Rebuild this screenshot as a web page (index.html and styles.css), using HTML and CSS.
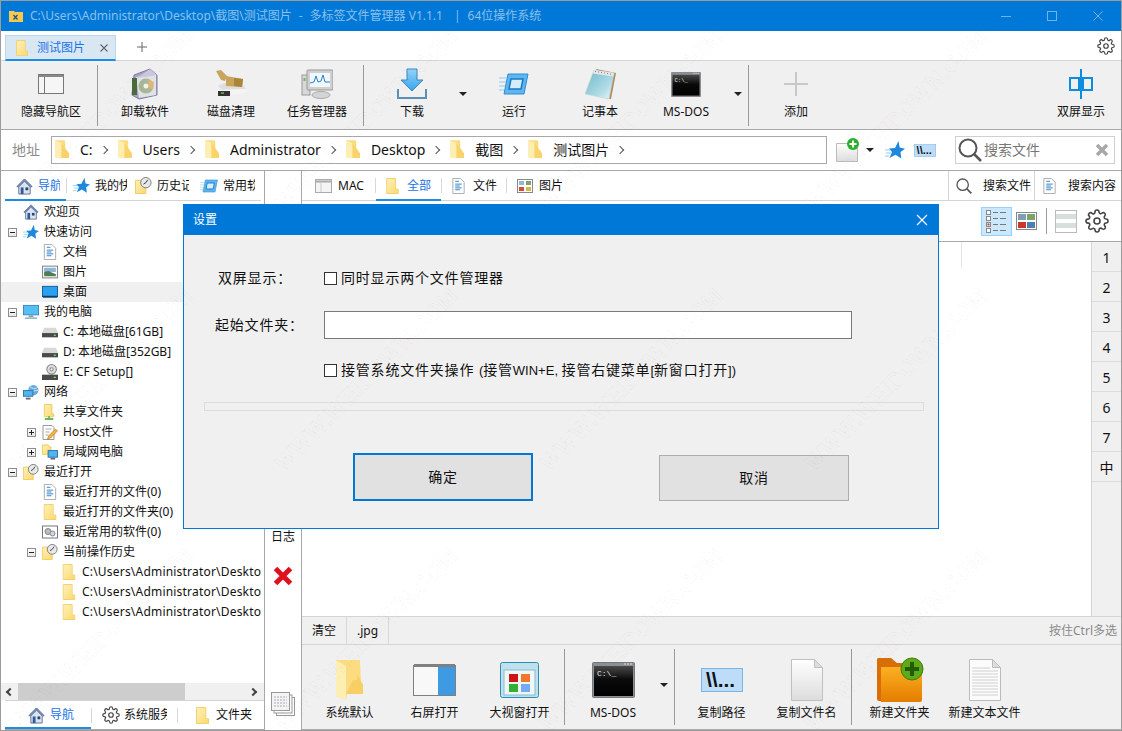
FILE: index.html
```html
<!DOCTYPE html>
<html lang="zh-CN">
<head>
<meta charset="utf-8">
<title>多标签文件管理器</title>
<link rel="stylesheet" href="styles.css">
</head>
<body>
<svg class="defs" width="0" height="0" aria-hidden="true">
<defs>
<linearGradient id="gy" x1="0" y1="0" x2="1" y2="1"><stop offset="0" stop-color="#fff0b8"/><stop offset="1" stop-color="#fbd970"/></linearGradient>
<linearGradient id="gb" x1="0" y1="0" x2="0" y2="1"><stop offset="0" stop-color="#8fd3fa"/><stop offset="1" stop-color="#3aa5ee"/></linearGradient>
<linearGradient id="gg" x1="0" y1="0" x2="0" y2="1"><stop offset="0" stop-color="#ffffff"/><stop offset="1" stop-color="#dcdcdc"/></linearGradient>
<linearGradient id="go" x1="0" y1="0" x2="0" y2="1"><stop offset="0" stop-color="#fdb022"/><stop offset="1" stop-color="#e37d00"/></linearGradient>
<linearGradient id="gk" x1="0" y1="0" x2="0" y2="1"><stop offset="0" stop-color="#4a4a4a"/><stop offset=".45" stop-color="#0a0a0a"/><stop offset="1" stop-color="#000"/></linearGradient>
<linearGradient id="gn" x1="0" y1="0" x2="1" y2="1"><stop offset="0" stop-color="#6fb7c9"/><stop offset=".65" stop-color="#aedbe6"/><stop offset="1" stop-color="#f2f6f6"/></linearGradient>
<symbol id="folder" viewBox="0 0 14 18"><path d="M.5.5h10v12h3v5H.5z" fill="#fde8a0" stroke="#eecb5c"/><path d="M1 1h9v12l3 .1V17H1z" fill="url(#gy)"/></symbol>
<symbol id="addr" viewBox="0 0 15 21"><path d="M0 0h10l1 1v12l3 1 1 5-12 0-3-1z" fill="#fbdc80"/><path d="M0 0l7 3v17l-4-1-3-1z" fill="#fdeeb4"/><path d="M7 3l8 11v5H7z" fill="#fad36a"/></symbol>
<symbol id="clockf" viewBox="0 0 18 18"><path d="M.5 3.500h11v14H.5z" fill="url(#gy)" stroke="#eecb5c"/><circle cx="11.500" cy="6" r="5.500" fill="#e8e8e8" stroke="#777"/><path d="M11.500 6l-2.500 1.500M11.500 6l2-3" stroke="#333" fill="none"/></symbol>
<symbol id="home" viewBox="0 0 18 18"><path d="M9 1L1 9l2 1v7h12v-7l2-1z" fill="#dfe4ee" stroke="#5f6f90"/><path d="M9 1L1 9l2 1 6-6 6 6 2-1z" fill="#6d84b4"/><path d="M5 10h3v7H5z" fill="#2a5d9e"/><path d="M10 10h3v3h-3z" fill="#25486f"/></symbol>
<symbol id="star" viewBox="0 0 20 20"><path d="M13.500 1l1.200 6.500 5.300 1.200-4.500 3.300.8 6.500-5.800-3.700L4.500 18l2.500-6-3-3.500 6 -.5z" fill="#1e88dc"/><path d="M0 10h5M1 13h5M0 16h4" stroke="#8ccbf2"/></symbol>
<symbol id="run" viewBox="0 0 30 22"><path d="M9 1h20l-4 20H5z" fill="#61b5ec" stroke="#2b8fd8"/><path d="M12 6h12l-2 10H10z" fill="#d4ecfb" stroke="#1679c8" stroke-width="1.500"/><path d="M0 5h8M0 9h7M0 13h6M0 17h5" stroke="#8ccbf2"/></symbol>
<symbol id="doc" viewBox="0 0 13 17"><path d="M.5.5h8l4 4v12H.5z" fill="#fff" stroke="#aaa"/><path d="M7 3.500H3M10 6.500H3M8 8.500H3M10 10.500H3M8 12.500H3" stroke="#2c7fc4"/></symbol>
<symbol id="pic" viewBox="0 0 15 12"><rect x=".5" y=".5" width="14" height="11" fill="#fff" stroke="#888"/><rect x="2" y="2" width="11" height="4" fill="#8fb7d6"/><path d="M2 6l4-1 7 3v2H2z" fill="#4f7c5a"/></symbol>
<symbol id="desk" viewBox="0 0 17 13"><rect x=".5" y=".5" width="16" height="11" fill="#2aa0ee" stroke="#0e5c9c"/><path d="M1 11.500h15" stroke="#0a3f72" stroke-width="2"/></symbol>
<symbol id="mon" viewBox="0 0 17 15"><rect x=".5" y=".5" width="16" height="10" fill="#55bff5" stroke="#3b87bb"/><path d="M6 12h5" stroke="#7aa" stroke-width="2"/><path d="M2 14h13" stroke="#8fa8b8" stroke-width="1.500"/></symbol>
<symbol id="hdd" viewBox="0 0 15 10"><path d="M2 1h11l2 5v3H0V6z" fill="#d8d8d8"/><path d="M0 6h15v4H0z" fill="#4a4a4a"/><path d="M11 8h2" stroke="#7f6"/></symbol>
<symbol id="cd" viewBox="0 0 15 15"><circle cx="9" cy="5" r="4.500" fill="#ddd" stroke="#888"/><circle cx="9" cy="5" r="1.500" fill="#fff" stroke="#888"/><path d="M0 10h15v5H0z" fill="#4a4a4a"/><path d="M11 12.500h2" stroke="#7f6"/></symbol>
<symbol id="net" viewBox="0 0 17 16"><circle cx="11" cy="6" r="5.500" fill="#68a8dc"/><path d="M7 2q4 4 9 1M6 6q5 2 10 0" stroke="#cfe6f6" fill="none"/><rect x=".5" y="6.500" width="10" height="6" fill="#4fb5ef" stroke="#2672aa"/><path d="M3 15h5" stroke="#667" stroke-width="2"/></symbol>
<symbol id="share" viewBox="0 0 13 17"><path d="M.5.5h8v10h2v3H.5z" fill="url(#gy)" stroke="#eecb5c"/><path d="M5.500 13v2M1 16h9" stroke="#36a336" stroke-width="1.500"/></symbol>
<symbol id="host" viewBox="0 0 15 16"><path d="M.5 1.500h9l2 2v12H.5z" fill="#fff" stroke="#999"/><path d="M3 5h6M3 8h4M3 11h3" stroke="#aaa"/><path d="M13 5l2 2-7 7-3 1 1-3z" fill="#f2b23a" stroke="#b27a14" stroke-width=".6"/></symbol>
<symbol id="lan" viewBox="0 0 17 16"><path d="M.5 .5h6l1 2h2v8H.5z" fill="url(#gy)" stroke="#eecb5c"/><rect x="6.500" y="6.500" width="10" height="7" fill="#4fb5ef" stroke="#2672aa"/><path d="M9 15h5" stroke="#667" stroke-width="2"/></symbol>
<symbol id="soft" viewBox="0 0 16 13"><rect x=".5" y=".5" width="15" height="12" fill="#fff" stroke="#777"/><circle cx="6" cy="6" r="3" fill="#bbb" stroke="#888"/><circle cx="10.500" cy="8" r="2.500" fill="#c9d6e6" stroke="#889"/></symbol>
<symbol id="gear" viewBox="0 0 24 24"><g fill="none" stroke="#444" stroke-width="1.600" stroke-linejoin="round"><circle cx="12" cy="12" r="3"/><path d="M19.400 15a1.650 1.650 0 0 0 .33 1.820l.06.06a2 2 0 1 1-2.830 2.830l-.06-.06a1.650 1.650 0 0 0-1.820-.33 1.650 1.650 0 0 0-1 1.510V21a2 2 0 1 1-4 0v-.09A1.650 1.650 0 0 0 9 19.400a1.650 1.650 0 0 0-1.820.33l-.06.06a2 2 0 1 1-2.830-2.830l.06-.06a1.650 1.650 0 0 0 .33-1.820 1.650 1.650 0 0 0-1.510-1H3a2 2 0 1 1 0-4h.09A1.650 1.650 0 0 0 4.600 9a1.650 1.650 0 0 0-.33-1.820l-.06-.06a2 2 0 1 1 2.830-2.830l.06.06a1.650 1.650 0 0 0 1.820.33H9a1.650 1.650 0 0 0 1-1.510V3a2 2 0 1 1 4 0v.09a1.650 1.650 0 0 0 1 1.510 1.650 1.650 0 0 0 1.820-.33l.06-.06a2 2 0 1 1 2.830 2.830l-.06.06a1.650 1.650 0 0 0-.33 1.820V9a1.650 1.650 0 0 0 1.510 1H21a2 2 0 1 1 0 4h-.09a1.650 1.650 0 0 0-1.510 1z"/></g></symbol>
<symbol id="mag" viewBox="0 0 24 24"><circle cx="10" cy="10" r="8.500" fill="none" stroke="#555" stroke-width="2"/><path d="M16 16l7 7" stroke="#555" stroke-width="2.500"/></symbol>
<symbol id="dos" viewBox="0 0 43 36"><rect x=".5" y=".5" width="42" height="35" rx="1" fill="#8b9096" stroke="#777"/><rect x="2" y="4" width="39" height="30" fill="url(#gk)"/><path d="M32 2h2M35 2h2M38 2h2" stroke="#ddd"/><text x="5" y="14" class="dost">C:\_</text></symbol>
<symbol id="copy" viewBox="0 0 42 24"><rect x=".5" y=".5" width="41" height="23" fill="#bcdcf8" stroke="#7cb4e4"/><text x="5" y="19" class="copyt">\\...</text></symbol>
<symbol id="page" viewBox="0 0 32 42"><path d="M.5.500h23l8 8v33H.5z" fill="url(#gg)" stroke="#c0c0c0"/><path d="M23.500.500v8h8z" fill="#ddd" stroke="#c0c0c0"/></symbol>
</defs>
</svg>

<div class="app">
  <header class="titlebar">
    <svg class="tfolder" viewBox="0 0 14 12"><path d="M0 1h5l1 1h8v10H0z" fill="#f4c94e"/><path d="M4.500 5l4 4.500M8.500 5l-4 4.500" stroke="#16528a" stroke-width="1.200"/></svg>
    <span class="ttext">C:\Users\Administrator\Desktop\截图\测试图片<span class="tdash">-</span>多标签文件管理器 V1.1.1<span class="tbar">|</span>64位操作系统</span>
    <span class="grow"></span>
    <svg class="wbtn" viewBox="0 0 12 12"><path d="M1 6.500h10" stroke="#6fb3e8"/></svg>
    <svg class="wbtn" viewBox="0 0 12 12"><rect x="1.500" y="1.500" width="9" height="9" fill="none" stroke="#6fb3e8"/></svg>
    <svg class="wbtn" viewBox="0 0 12 12"><path d="M1.500 1.500l9 9M10.500 1.500l-9 9" stroke="#6fb3e8"/></svg>
  </header>

  <div class="tabrow">
    <div class="doctab">
      <svg class="i-folder"><use href="#folder"/></svg>
      <span class="doclabel">测试图片</span>
      <svg class="docx" viewBox="0 0 10 10"><path d="M1.500 1.500l7 7M8.500 1.500l-7 7" stroke="#666" stroke-width="1.100"/></svg>
    </div>
    <svg class="docplus" viewBox="0 0 10 10"><path d="M5 0v10M0 5h10" stroke="#666"/></svg>
    <span class="grow"></span>
    <svg class="i-gear16"><use href="#gear"/></svg>
  </div>

  <div class="toolbar">
    <div class="tool first">
      <div class="ticon"><svg width="26" height="20" viewBox="0 0 26 20"><rect x=".5" y=".5" width="25" height="19" fill="#f6f6f6" stroke="#777"/><path d="M.5 2h25" stroke="#888" stroke-width="2"/><path d="M6.500 3v16" stroke="#777"/></svg></div>
      <span>隐藏导航区</span>
    </div>
    <i class="vsep s1"></i>
    <div class="tool">
      <div class="ticon"><svg width="28" height="32" viewBox="0 0 28 32"><path d="M3 7L19 1l7 6v20L8 31 1 27z" fill="#a9a4c8" stroke="#7f7ba2"/><path d="M5 9l20-3v21L8 30z" fill="#dfe3e4"/><path d="M19 1l7 6-20 3z" fill="#c9c6de"/><circle cx="15" cy="18" r="7.500" fill="#a8b79b"/><circle cx="15" cy="18" r="2.500" fill="#f6f2e2"/><path d="M17 12l6 2-1 8-4-3z" fill="#e2b678"/><path d="M1 10h5v17H1z" fill="#4d6a3c"/></svg></div>
      <span>卸载软件</span>
    </div>
    <div class="tool">
      <div class="ticon"><svg width="30" height="28" viewBox="0 0 30 28"><path d="M2 16l6-3 18 1 4 5-24 1z" fill="#dedede"/><path d="M2 20l28-1v4L6 26H2z" fill="#f4f4f4"/><path d="M2 21h12v5H2z" fill="#333"/><path d="M5 23h3" stroke="#8f6"/><path d="M10 6l17 3-1 8-16-1z" fill="#c8a558"/><path d="M18 8l9 1-1 8-8-1z" fill="#a9853e"/><path d="M0 1l5-1 6 6-2 5-4-1z" fill="#c9a660"/></svg></div>
      <span>磁盘清理</span>
    </div>
    <div class="tool">
      <div class="ticon"><svg width="32" height="30" viewBox="0 0 32 30"><rect x="1" y="6" width="8" height="20" fill="#d8d8d8" stroke="#999"/><rect x="2.500" y="9" width="2" height="3" fill="#6b6"/><rect x="6" y="1" width="26" height="20" rx="1" fill="#d0d0d0" stroke="#999"/><rect x="9" y="4" width="20" height="14" fill="#f0f8fd"/><path d="M9 14l4-1 2-6 2 6 3-1 2-6 2 7 5 0" fill="none" stroke="#2a7fc8"/><ellipse cx="20" cy="26" rx="9" ry="3.500" fill="#d4d4d4" stroke="#aaa"/></svg></div>
      <span>任务管理器</span>
    </div>
    <i class="vsep s2"></i>
    <div class="tool">
      <div class="ticon"><svg width="30" height="32" viewBox="0 0 30 32"><path d="M10 1h10v11h6L15 23 4 12h6z" fill="url(#gb)" stroke="#3c86bf"/><path d="M1 21v9h28v-9" fill="none" stroke="#5a8fb8" stroke-width="2"/></svg></div>
      <span>下载</span>
    </div>
    <div class="drop"><i class="caret"></i></div>
    <div class="tool">
      <div class="ticon"><svg class="i-runlg"><use href="#run"/></svg></div>
      <span>运行</span>
    </div>
    <div class="tool">
      <div class="ticon"><svg width="31" height="32" viewBox="0 0 31 32"><path d="M11 1l20 4-5 26h-4z" fill="#a98d5c"/><path d="M9 2l20 3-5 26L0 26z" fill="url(#gn)" stroke="#c4d4d8" stroke-width=".6"/><path d="M9 2l20 3-.7 3.500-20.500-3z" fill="#e6e6e6"/><path d="M10 3.500h1M13 4h1M16 4.500h1M19 5h1M22 5.500h1M25 6h1" stroke="#888"/></svg></div>
      <span>记事本</span>
    </div>
    <div class="tool">
      <div class="ticon"><svg width="30" height="25"><use href="#dos"/></svg></div>
      <span>MS-DOS</span>
    </div>
    <div class="drop narrow"><i class="caret"></i></div>
    <i class="vsep s3"></i>
    <div class="tool">
      <div class="ticon"><svg width="26" height="26" viewBox="0 0 26 26"><path d="M13 1v24M1 13h24" stroke="#c8c8c8" stroke-width="2"/></svg></div>
      <span>添加</span>
    </div>
    <span class="grow"></span>
    <div class="tool last">
      <div class="ticon"><svg width="26" height="30" viewBox="0 0 26 30"><rect x="2" y="9" width="9" height="12" fill="none" stroke="#0e8de0" stroke-width="2"/><rect x="15" y="9" width="9" height="12" fill="none" stroke="#0e8de0" stroke-width="2"/><path d="M13 0v30" stroke="#0e8de0" stroke-width="2"/></svg></div>
      <span>双屏显示</span>
    </div>
  </div>

  <div class="addrbar">
    <span class="addrlabel">地址</span>
    <div class="crumbs">
      <svg class="i-addr"><use href="#addr"/></svg><span class="c">C:</span><i class="chev"></i>
      <svg class="i-addr"><use href="#addr"/></svg><span class="c">Users</span><i class="chev"></i>
      <svg class="i-addr"><use href="#addr"/></svg><span class="c">Administrator</span><i class="chev"></i>
      <svg class="i-addr"><use href="#addr"/></svg><span class="c">Desktop</span><i class="chev"></i>
      <svg class="i-addr"><use href="#addr"/></svg><span class="c">截图</span><i class="chev"></i>
      <svg class="i-addr"><use href="#addr"/></svg><span class="c">测试图片</span><i class="chev"></i>
    </div>
    <svg class="newdoc" viewBox="0 0 24 24"><path d="M.5 5.500h15l6 5v13H.5z" fill="url(#gg)" stroke="#bbb"/><circle cx="17" cy="6" r="6" fill="#2cae2c"/><path d="M17 2.500v7M13.500 6h7" stroke="#fff" stroke-width="2"/></svg>
    <i class="caret addrcaret"></i>
    <svg class="i-star20"><use href="#star"/></svg>
    <svg class="i-copy22"><use href="#copy"/></svg>
    <div class="search">
      <svg class="i-mag25"><use href="#mag"/></svg>
      <span class="ph">搜索文件</span>
      <span class="grow"></span>
      <svg class="searchx" viewBox="0 0 14 14"><path d="M2 2l10 10M12 2L2 12" stroke="#a8a8a8" stroke-width="3.500"/></svg>
    </div>
  </div>

  <main class="main">
    <aside class="nav">
      <div class="ltabs">
        <div class="ltab on w60"><svg class="i16"><use href="#home"/></svg><span class="clip c21">导航</span></div>
        <i class="tick"></i>
        <div class="ltab w69"><svg class="i16"><use href="#star"/></svg><span class="clip c32">我的快捷</span></div>
        <div class="ltab w65"><svg class="i16"><use href="#clockf"/></svg><span class="clip c32">历史记录</span></div>
        <div class="ltab w62"><svg class="i-run18"><use href="#run"/></svg><span class="clip c32">常用软件</span></div>
      </div>
      <div class="tree">
        <div class="row l0"><i class="exp none"></i><svg class="ti"><use href="#home"/></svg><span>欢迎页</span></div>
        <div class="row l0"><i class="exp minus"></i><svg class="ti"><use href="#star"/></svg><span>快速访问</span></div>
        <div class="row l1"><i class="exp none"></i><svg class="ti"><use href="#doc"/></svg><span>文档</span></div>
        <div class="row l1"><i class="exp none"></i><svg class="ti"><use href="#pic"/></svg><span>图片</span></div>
        <div class="row l1 sel"><i class="exp none"></i><svg class="ti"><use href="#desk"/></svg><span>桌面</span></div>
        <div class="row l0"><i class="exp minus"></i><svg class="ti"><use href="#mon"/></svg><span>我的电脑</span></div>
        <div class="row l1"><i class="exp none"></i><svg class="ti"><use href="#hdd"/></svg><span>C: 本地磁盘[61GB]</span></div>
        <div class="row l1"><i class="exp none"></i><svg class="ti"><use href="#hdd"/></svg><span>D: 本地磁盘[352GB]</span></div>
        <div class="row l1"><i class="exp none"></i><svg class="ti"><use href="#cd"/></svg><span>E: CF Setup[]</span></div>
        <div class="row l0"><i class="exp minus"></i><svg class="ti"><use href="#net"/></svg><span>网络</span></div>
        <div class="row l1"><i class="exp none"></i><svg class="ti"><use href="#share"/></svg><span>共享文件夹</span></div>
        <div class="row l1"><i class="exp plus"></i><svg class="ti"><use href="#host"/></svg><span>Host文件</span></div>
        <div class="row l1"><i class="exp plus"></i><svg class="ti"><use href="#lan"/></svg><span>局域网电脑</span></div>
        <div class="row l0"><i class="exp minus"></i><svg class="ti"><use href="#clockf"/></svg><span>最近打开</span></div>
        <div class="row l1"><i class="exp none"></i><svg class="ti"><use href="#doc"/></svg><span>最近打开的文件(0)</span></div>
        <div class="row l1"><i class="exp none"></i><svg class="ti"><use href="#folder"/></svg><span>最近打开的文件夹(0)</span></div>
        <div class="row l1"><i class="exp none"></i><svg class="ti"><use href="#soft"/></svg><span>最近常用的软件(0)</span></div>
        <div class="row l1"><i class="exp minus"></i><svg class="ti"><use href="#clockf"/></svg><span>当前操作历史</span></div>
        <div class="row l2"><i class="exp none"></i><svg class="ti"><use href="#folder"/></svg><span>C:\Users\Administrator\Deskto</span></div>
        <div class="row l2"><i class="exp none"></i><svg class="ti"><use href="#folder"/></svg><span>C:\Users\Administrator\Deskto</span></div>
        <div class="row l2"><i class="exp none"></i><svg class="ti"><use href="#folder"/></svg><span>C:\Users\Administrator\Deskto</span></div>
      </div>
      <div class="hscroll"><i class="arr la"></i><i class="thumb"></i><span class="grow"></span><i class="arr ra"></i></div>
      <div class="btabs">
        <div class="btab on"><svg class="i16"><use href="#home"/></svg><span>导航</span></div>
        <i class="tick"></i>
        <div class="btab w86"><svg class="i-gear16"><use href="#gear"/></svg><span class="clip c43">系统服务</span></div>
        <i class="tick"></i>
        <div class="btab w86b"><svg class="i-bf"><use href="#folder"/></svg><span>文件夹</span></div>
      </div>
    </aside>

    <div class="side">
      <span class="grow"></span>
      <span class="sidelog">日志</span>
      <svg class="sidex" viewBox="0 0 20 20"><path d="M2.500 2.500l15 15M17.500 2.500l-15 15" stroke="#e0101c" stroke-width="5"/></svg>
      <span class="grow2"></span>
      <svg class="sidestack" viewBox="0 0 24 24"><rect x="5.500" y="5.500" width="18" height="18" fill="#fff" stroke="#999"/><rect x="3" y="3" width="18" height="18" fill="#fff" stroke="#999"/><rect x=".5" y=".5" width="18" height="18" fill="#f4f4f4" stroke="#999"/><path d="M3 5h13M3 8h13M3 11h13M3 14h13" stroke="#aab" stroke-dasharray="2 1"/></svg>
    </div>

    <section class="content">
      <div class="rtabs">
        <div class="rtab t1"><svg class="i-mac" viewBox="0 0 17 14"><rect x=".5" y=".5" width="16" height="13" fill="#f4f4f4" stroke="#aaa"/><path d="M1 2.500h15" stroke="#aaa" stroke-width="2"/><path d="M6 4v9" stroke="#ccc"/></svg><span>MAC</span></div>
        <i class="tick"></i>
        <div class="rtab on t2"><svg class="i-rf"><use href="#folder"/></svg><span>全部</span></div>
        <i class="tick"></i>
        <div class="rtab t3"><svg class="i-rf"><use href="#doc"/></svg><span>文件</span></div>
        <i class="tick"></i>
        <div class="rtab t4"><svg class="i-pics" viewBox="0 0 16 14"><rect x=".5" y=".5" width="15" height="13" fill="#fff" stroke="#888"/><rect x="2" y="2" width="5" height="4" fill="#8fb7d6"/><rect x="9" y="2" width="5" height="4" fill="#7da36b"/><rect x="2" y="8" width="5" height="4" fill="#d94a36"/><rect x="9" y="8" width="5" height="4" fill="#d7b64a"/></svg><span>图片</span></div>
        <span class="grow"></span>
        <div class="rs s-a"><svg class="i-mag16"><use href="#mag"/></svg><span>搜索文件</span></div>
        <div class="rs s-b"><svg class="i-rf"><use href="#doc"/></svg><span>搜索内容</span></div>
      </div>
      <div class="viewbar">
        <span class="grow"></span>
        <div class="vbtn"><svg width="21" height="24" viewBox="0 0 21 24"><g fill="#fff" stroke="#888"><rect x=".5" y="1.500" width="4" height="4"/><rect x=".5" y="7.500" width="4" height="4"/><rect x=".5" y="13.500" width="4" height="4"/><rect x=".5" y="19.500" width="4" height="4"/></g><path d="M7 3.500h5M14 3.500h6M7 9.500h5M14 9.500h6M7 15.500h5M14 15.500h6M7 21.500h5M14 21.500h6" stroke="#777"/><rect x="1.500" y="14.500" width="2" height="2" fill="#c33"/></svg></div>
        <svg class="vthumbs" viewBox="0 0 21 18"><rect x=".5" y=".5" width="20" height="17" fill="#fff" stroke="#888"/><rect x="2" y="2" width="8" height="6" fill="#7f9fb5"/><rect x="11" y="2" width="8" height="6" fill="#7da36b"/><rect x="2" y="10" width="8" height="6" fill="#c9392a"/><rect x="11" y="10" width="8" height="6" fill="#4e7fae"/></svg>
        <i class="vsep v4"></i>
        <svg class="vrows" viewBox="0 0 22 23"><rect x=".5" y=".5" width="21" height="22" fill="#fff" stroke="#bbb"/><rect x="1" y="4" width="20" height="5" fill="#d6dfdc"/><rect x="1" y="13" width="20" height="5" fill="#d6dfdc"/></svg>
        <svg class="vgear"><use href="#gear"/></svg>
      </div>
      <div class="listwrap">
        <div class="list"><i class="coltick"></i></div>
        <div class="letters">
          <b>1</b><b>2</b><b>3</b><b>4</b><b>5</b><b>6</b><b>7</b><b>中</b>
        </div>
      </div>
      <div class="filter">
        <span class="fi">清空</span><span class="fi">.jpg</span>
        <span class="grow"></span>
        <span class="fhint">按住Ctrl多选</span>
      </div>
      <div class="actions">
        <div class="act a1"><div class="aicon"><svg width="28" height="40" viewBox="0 0 28 40"><path d="M0 0h24l1 24 2 0v10l-16 0-1 6-10-4z" fill="#fbdc80"/><path d="M0 0l10 6v34L0 36z" fill="#fdeeb4"/><path d="M10 34l7-14h4v-6l6 11v9z" fill="#f7cf65"/></svg></div><span>系统默认</span></div>
        <div class="act"><div class="aicon"><svg width="43" height="32" viewBox="0 0 43 32"><rect x=".5" y="1.500" width="42" height="30" fill="#f8f8f8" stroke="#808080"/><path d="M1 1.500h41" stroke="#808080" stroke-width="3"/><rect x="25" y="3" width="17" height="28" fill="#3f9ae4"/></svg></div><span>右屏打开</span></div>
        <div class="act"><div class="aicon"><svg width="39" height="36" viewBox="0 0 39 36"><rect x=".5" y=".5" width="38" height="35" rx="2" fill="#bfe0ec" stroke="#2a8fb0"/><rect x="4" y="8" width="31" height="25" fill="#eef6f8" stroke="#8bbccc"/><rect x="9" y="12" width="9" height="8" fill="#cc1515"/><rect x="21" y="12" width="9" height="8" fill="#f0782a"/><rect x="9" y="22" width="9" height="8" fill="#35ae35"/><rect x="21" y="22" width="9" height="8" fill="#76abf2"/></svg></div><span>大视窗打开</span></div>
        <i class="vsep b1"></i>
        <div class="act dosact"><div class="aicon"><svg width="43" height="36"><use href="#dos"/></svg></div><span>MS-DOS</span></div>
        <div class="bdrop"><i class="caret"></i></div>
        <i class="vsep b2"></i>
        <div class="act"><div class="aicon"><svg width="42" height="24"><use href="#copy"/></svg></div><span>复制路径</span></div>
        <div class="act"><div class="aicon"><svg width="32" height="42"><use href="#page"/></svg></div><span>复制文件名</span></div>
        <i class="vsep b3"></i>
        <div class="act"><div class="aicon"><svg width="48" height="46" viewBox="0 0 48 46"><path d="M1 2q0-1 2-1h12l6 5h22v38H3q-2 0-2-2z" fill="#d96e08"/><path d="M5 10h41v33q0 2-2 2H5z" fill="url(#go)"/><circle cx="36" cy="12" r="11" fill="#5eaa18" stroke="#3f7d0c"/><path d="M36 5v14M29 12h14" stroke="#235b05" stroke-width="4"/></svg></div><span>新建文件夹</span></div>
        <div class="act"><div class="aicon"><svg width="32" height="42" viewBox="0 0 32 42"><path d="M.5.500h23l8 8v33H.5z" fill="#fbfbfb" stroke="#bbb"/><path d="M23.500.500v8h8z" fill="#ddd" stroke="#bbb"/><path d="M3 9h18M3 12h26M3 15h26M3 18h26M3 21h26M3 24h26M3 27h26M3 30h26M3 33h26M3 36h26" stroke="#d0d0d0"/></svg></div><span>新建文本文件</span></div>
      </div>
    </section>
  </main>

  <div class="dialog">
    <div class="dhead"><span>设置</span><span class="grow"></span><svg class="dx" viewBox="0 0 12 12"><path d="M1 1l10 10M11 1L1 11" stroke="#fff" stroke-width="1.100"/></svg></div>
    <div class="dbody">
      <div class="drow r1"><label class="dlabel">双屏显示：</label><i class="check"></i><span class="dtext">同时显示两个文件管理器</span></div>
      <div class="drow r2"><label class="dlabel">起始文件夹：</label><div class="dinput"></div></div>
      <div class="drow r3"><span class="dlabel"></span><i class="check"></i><span class="dtext">接管系统文件夹操作 <span class="lat">(</span>接管<span class="lat">WIN+E, </span>接管右键菜单<span class="lat">[</span>新窗口打开<span class="lat">])</span></span></div>
      <div class="dprog"></div>
      <div class="dbtns"><div class="btn ok">确定</div><div class="btn cancel">取消</div></div>
    </div>
  </div>

  <div class="wm" aria-hidden="true">
    <span>WWW.WEIDOWN.COM</span><span>WWW.WEIDOWN.COM</span><span>WWW.WEIDOWN.COM</span><span>WWW.WEIDOWN.COM</span>
    <span>WWW.WEIDOWN.COM</span><span>WWW.WEIDOWN.COM</span><span>WWW.WEIDOWN.COM</span><span>WWW.WEIDOWN.COM</span>
    <span>WWW.WEIDOWN.COM</span><span>WWW.WEIDOWN.COM</span><span>WWW.WEIDOWN.COM</span><span>WWW.WEIDOWN.COM</span>
  </div>
</div>
</body>
</html>
```
FILE: styles.css
```css
* { box-sizing: border-box; }
html, body { margin: 0; height: 100%; overflow: hidden; }
body { font: 12px/20px "Noto Sans", "Noto Sans CJK SC", sans-serif; color: #111; background: #fff; }
svg { display: block; flex: none; overflow: hidden; }
i { display: block; flex: none; }
.defs { position: absolute; }
.dost { font: 8px "Liberation Mono", monospace; fill: #e8e8e8; }
.copyt { font: bold 21px "Liberation Sans", sans-serif; fill: #111; }
.grow { flex: 1; }
.app { position: relative; width: 1122px; height: 731px; border: 1px solid #9c9c9c; display: flex; flex-direction: column; overflow: hidden; background: #fff; }
.tick { width: 1px; height: 15px; align-self: center; background: #d8d8d8; }

.titlebar { height: 30px; flex: none; background: #0078d7; display: flex; align-items: center; padding: 0 0 0 8px; color: #8cc0ea; }
.tfolder { width: 14px; height: 12px; margin-right: 7px; }
.ttext { font-size: 12px; white-space: nowrap; }
.tdash { margin: 0 7px; }
.tbar { margin: 0 7px 0 11px; }
.wbtn { width: 12px; height: 12px; margin-right: 34px; }
.wbtn:last-child { margin-right: 17px; }

.tabrow { height: 30px; flex: none; display: flex; align-items: flex-end; border-bottom: 1px solid #d4d4d4; padding: 0 6px 0 4px; }
.doctab { width: 111px; height: 26px; background: #d9e7f3; border: 1px solid #b8d8f2; border-bottom: 2px solid #1c8ce6; display: flex; align-items: center; padding-left: 10px; margin-bottom: -1px; }
.i-folder { width: 12px; height: 16px; margin-right: 9px; }
.doclabel { color: #1a73e8; font-size: 12px; }
.docx { width: 10px; height: 10px; margin-left: 14px; }
.docplus { width: 10px; height: 10px; margin: 0 0 8px 21px; }
.i-gear16 { width: 18px; height: 18px; }
.tabrow .i-gear16 { margin-bottom: 5px; }

.toolbar { height: 69px; flex: none; background: #f0f0f0; border-bottom: 1px solid #a8a8a8; display: flex; padding-left: 7px; padding-right: 10px; }
.tool { width: 86px; display: flex; flex-direction: column; align-items: center; padding-top: 5px; white-space: nowrap; }
.ticon { height: 36px; display: flex; align-items: center; justify-content: center; }
.i-runlg { width: 30px; height: 22px; }
.tool.last { width: 60px; }
.drop { width: 16px; padding-top: 31px; display: flex; justify-content: center; }
.drop.narrow { width: 18px; }
.caret { width: 0; height: 0; border: 4px solid transparent; border-top: 4px solid #222; border-bottom: 0; }
.vsep { width: 1px; background: #9a9a9a; }
.s1 { margin: 4px 4px 3px 3px; }
.s2 { margin: 4px 5px 3px 3px; }
.s3 { margin: 4px 4px 3px 1px; }

.addrbar { height: 41px; flex: none; background: #fff; border-bottom: 1px solid #a8a8a8; display: flex; align-items: center; padding: 0 6px 0 11px; }
.addrlabel { width: 39px; color: #8a8a8a; font-size: 14px; }
.crumbs { width: 776px; height: 28px; border: 1px solid #a8a8a8; display: flex; align-items: center; padding-left: 3px; font-size: 14px; margin-right: 9px; }
.i-addr { width: 14px; height: 20px; }
.c { margin: 0 8px 0 11px; white-space: nowrap; }
.chev { width: 6px; height: 6px; border-top: 1px solid #555; border-right: 1px solid #555; transform: rotate(45deg); margin-right: 11px; }
.newdoc { width: 24px; height: 24px; margin-right: 6px; }
.addrcaret { margin-right: 11px; }
.i-star20 { width: 20px; height: 20px; margin-right: 9px; }
.i-copy22 { width: 22px; height: 13px; margin-right: 19px; }
.search { width: 160px; height: 28px; border: 1px solid #d0d0d0; display: flex; align-items: center; padding: 0 5px 0 2px; }
.i-mag25 { width: 24px; height: 24px; margin-right: 2px; }
.ph { font-size: 14px; color: #777; }
.searchx { width: 14px; height: 14px; }

.main { flex: 1; min-height: 0; display: flex; }
.nav { width: 264px; flex: none; border-right: 1px solid #a8a8a8; display: flex; flex-direction: column; }
.ltabs { height: 30px; flex: none; display: flex; margin: 0 3px 0 4px; border-bottom: 1px solid #d4d4d4; }
.ltab { display: flex; align-items: center; gap: 5px; padding-left: 11px; overflow: hidden; }
.ltab.on { border-bottom: 2px solid #1c8ce6; color: #1a73e8; margin-bottom: -1px; padding-top: 2px; }
.w60 { width: 61px; }
.w69 { width: 68px; padding-left: 6px; }
.w65 { width: 65px; padding-left: 0; }
.w62 { width: 60px; padding-left: 0; }
.i16 { width: 17px; height: 17px; }
.i-run18 { width: 18px; height: 14px; }
.clip { overflow: hidden; white-space: nowrap; }
.c21 { width: 22px; }
.c32 { width: 32px; }
.c43 { width: 43px; }

.tree { flex: 1; min-height: 0; overflow: hidden; padding-top: 1px; }
.row { height: 20px; display: flex; align-items: center; white-space: nowrap; overflow: hidden; }
.row.l0 { padding-left: 7px; }
.row.l1 { padding-left: 26px; }
.row.l2 { padding-left: 45px; letter-spacing: .2px; }
.row.sel { background: #f0f0f0; }
.exp { position: relative; width: 9px; height: 9px; margin-right: 6px; }
.exp.minus, .exp.plus { background: linear-gradient(#fff, #e6e6e6); border: 1px solid #8e8e8e; }
.exp.minus::before, .exp.plus::before { content: ""; position: absolute; left: 1px; top: 3px; width: 5px; height: 1px; background: #222; }
.exp.plus::after { content: ""; position: absolute; left: 3px; top: 1px; width: 1px; height: 5px; background: #222; }
.ti { width: 16px; height: 16px; margin-right: 5px; }

.hscroll { height: 17px; flex: none; background: #f0f0f0; display: flex; align-items: center; }
.arr { width: 6px; height: 6px; border-top: 2px solid #444; border-left: 2px solid #444; }
.la { transform: rotate(-45deg); margin: 0 5px 0 6px; }
.ra { transform: rotate(135deg); margin-right: 8px; }
.thumb { width: 167px; height: 17px; background: #cdcdcd; }
.btabs { height: 30px; flex: none; display: flex; margin-left: 4px; border-top: 1px solid #d4d4d4; border-bottom: 1px solid #a8a8a8; }
.btab { display: flex; align-items: center; white-space: nowrap; overflow: hidden; }
.btab.on { width: 86px; gap: 5px; padding: 2px 0 0 23px; color: #1a73e8; border-bottom: 2px solid #1c8ce6; }
.w86 { width: 85px; padding-left: 10px; gap: 4px; }
.w86b { width: 76px; padding-left: 18px; gap: 7px; }
.i-bf { width: 13px; height: 17px; }

.side { width: 37px; flex: none; border-right: 1px solid #a8a8a8; display: flex; flex-direction: column; align-items: center; padding-bottom: 14px; }
.sidelog { height: 20px; }
.sidex { width: 20px; height: 20px; margin-top: 19px; }
.grow2 { height: 106px; flex: none; }
.sidestack { width: 24px; height: 24px; }

.content { flex: 1; min-width: 0; display: flex; flex-direction: column; }
.rtabs { height: 30px; flex: none; display: flex; border-bottom: 1px solid #d4d4d4; }
.rtab { height: 30px; display: flex; align-items: center; white-space: nowrap; }
.rtab.on { color: #1a73e8; border-bottom: 2px solid #1c8ce6; padding-top: 2px; }
.t1 { width: 73px; padding-left: 13px; gap: 6px; }
.t2 { width: 65px; padding-left: 10px; gap: 8px; }
.t3 { width: 64px; padding-left: 10px; gap: 8px; }
.t4 { width: 66px; padding-left: 10px; gap: 6px; }
.i-mac { width: 17px; height: 14px; }
.i-rf { width: 13px; height: 16px; }
.i-pics { width: 16px; height: 14px; }
.rs { display: flex; align-items: center; border-left: 1px solid #d4d4d4; height: 30px; white-space: nowrap; }
.s-a { width: 86px; padding-left: 7px; gap: 11px; }
.s-b { width: 87px; padding-left: 8px; gap: 12px; }
.i-mag16 { width: 16px; height: 16px; }

.viewbar { height: 41px; flex: none; display: flex; align-items: center; border-bottom: 1px solid #a8a8a8; padding-right: 12px; }
.vbtn { width: 31px; height: 29px; background: #cce8ff; border: 1px solid #99d1ff; display: flex; align-items: center; justify-content: center; margin-right: 4px; }
.vthumbs { width: 21px; height: 18px; margin-right: 9px; }
.v4 { height: 26px; margin-right: 8px; }
.vrows { width: 22px; height: 23px; margin-right: 8px; }
.vgear { width: 24px; height: 24px; }

.listwrap { flex: 1; min-height: 0; display: flex; }
.list { flex: 1; }
.coltick { width: 1px; height: 26px; background: #e4e4e4; margin-left: 659px; }
.letters { width: 30px; flex: none; background: #f0f0f0; border-left: 1px solid #d4d4d4; display: flex; flex-direction: column; }
.letters b { font: 14px/31px "Noto Sans", "Noto Sans CJK SC", sans-serif; height: 30px; text-align: center; border-bottom: 1px solid #dcdcdc; }

.filter { height: 29px; flex: none; background: #f0f0f0; border-top: 1px solid #d4d4d4; border-bottom: 1px solid #d4d4d4; display: flex; align-items: center; }
.fi { height: 27px; line-height: 27px; padding: 0 10px; border-right: 1px solid #d8d8d8; }
.fhint { color: #8a8a8a; margin-right: 4px; }

.actions { height: 85px; flex: none; background: #f0f0f0; border-bottom: 1px solid #a8a8a8; display: flex; padding-left: 5px; }
.act { width: 85px; display: flex; flex-direction: column; align-items: center; white-space: nowrap; padding-top: 12px; }
.aicon { height: 46px; display: flex; align-items: center; justify-content: center; }
.dosact { width: 88px; }
.bdrop { width: 14px; padding-top: 38px; display: flex; justify-content: center; }
.b1 { margin: 4px 4px 4px 2px; }
.b2 { margin: 4px 4px 4px 3px; }
.b3 { margin: 4px 5px 4px 2px; }

.dialog { position: absolute; left: 182px; top: 203px; width: 756px; height: 325px; background: #f0f0f0; border: 1px solid #0078d7; display: flex; flex-direction: column; }
.dhead { height: 30px; flex: none; background: #0078d7; color: #fff; display: flex; align-items: center; padding: 0 10px 0 9px; }
.dx { width: 12px; height: 12px; }
.dbody { flex: 1; padding: 33px 14px 0 20px; font: 14px/20px "Liberation Sans", "Noto Sans CJK SC", sans-serif; letter-spacing: .8px; }
.drow { display: flex; align-items: center; }
.dlabel { width: 120px; white-space: nowrap; }
.r1 .dlabel { padding-left: 14px; }
.r2 .dlabel { padding-left: 11px; }
.r2 { margin-top: 23px; }
.r3 { margin-top: 21px; }
.check { width: 13px; height: 13px; background: #fff; border: 1px solid #333; margin-right: 4px; }
.dtext { white-space: nowrap; }
.lat { letter-spacing: 0; font-size: 13px; }
.dinput { width: 528px; height: 28px; background: #fff; border: 1px solid #7a7a7a; }
.dprog { height: 9px; border: 1px solid #dcdcdc; margin-top: 21px; }
.dbtns { display: flex; margin-top: 42px; align-items: flex-end; padding-left: 149px; }
.btn { background: #e1e1e1; display: flex; align-items: center; justify-content: center; }
.ok { width: 180px; height: 48px; border: 2px solid #0078d7; margin-right: 126px; }
.cancel { width: 190px; height: 46px; border: 1px solid #adadad; }

.wm { position: absolute; left: -32px; top: -12px; display: grid; grid-template-columns: repeat(4, 265px); grid-template-rows: repeat(3, 260px); pointer-events: none; }
.wm span { align-self: center; justify-self: center; transform: rotate(-45deg); white-space: nowrap; font: bold 23px "Liberation Sans", sans-serif; color: transparent; -webkit-text-stroke: 1px rgba(0, 0, 0, .035); }
```
